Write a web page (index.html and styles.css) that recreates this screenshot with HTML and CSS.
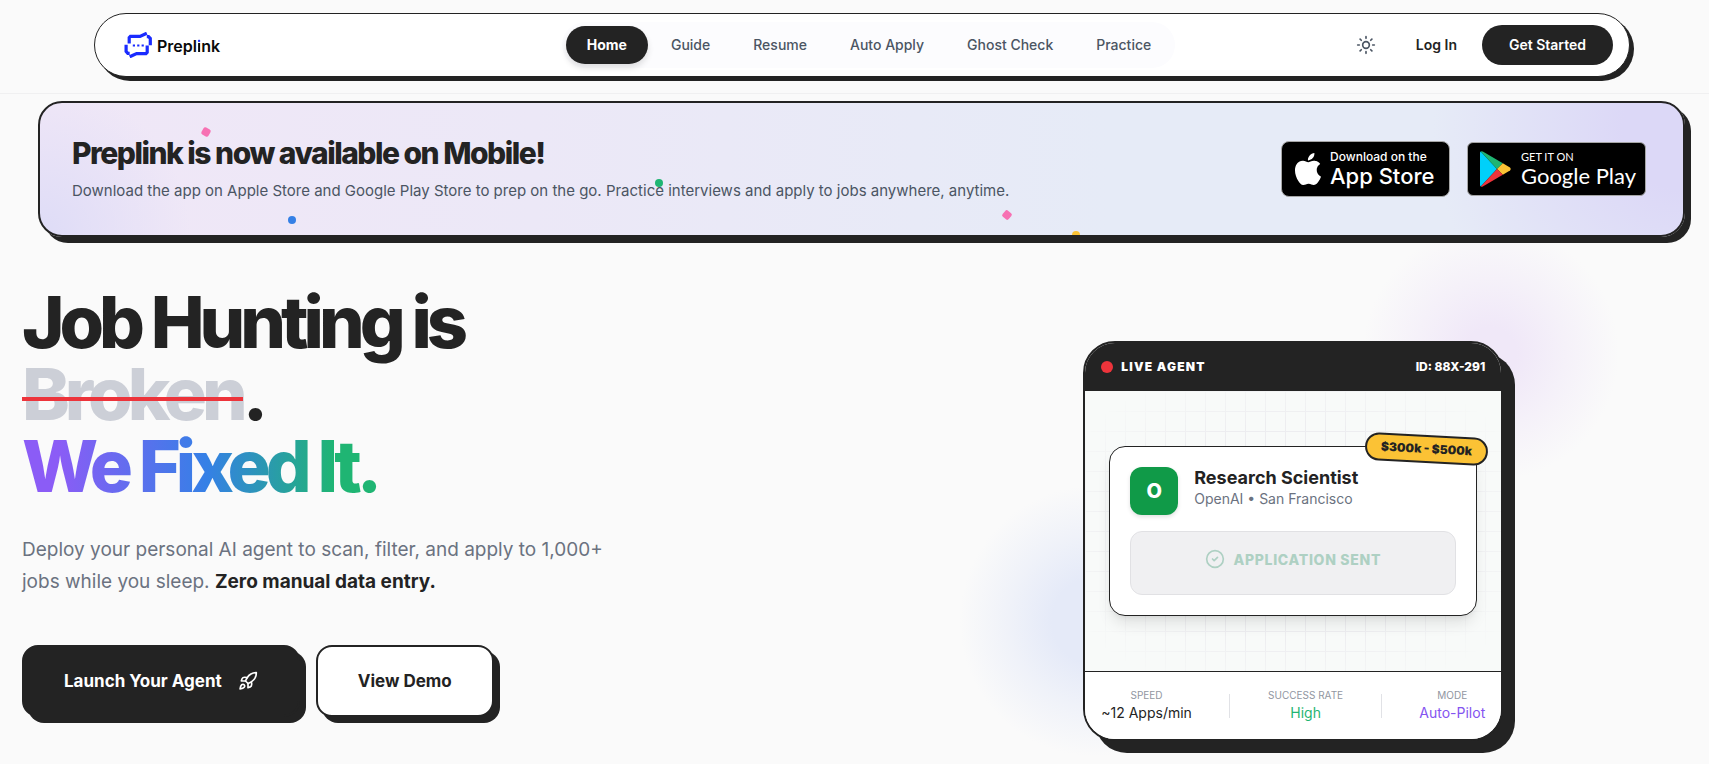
FILE: index.html
```html
<!DOCTYPE html>
<html lang="en">
<head>
<meta charset="utf-8">
<meta name="viewport" content="width=device-width, initial-scale=1">
<title>Preplink</title>
<link rel="stylesheet" href="styles.css">
</head>
<body>
<header class="site-header">
  <div class="header-pill">
    <a class="logo" href="#">
      <svg class="logo-mark" viewBox="0 0 28 26" fill="none" stroke="#1a2bff" stroke-width="3.2" aria-hidden="true">
        <path d="M5.200 11.500V5.600L6.400 4.400H16L22.800 1.200"/>
        <path d="M22.800 4.600H24.500L26.300 6.500V13.200"/>
        <path d="M23.200 13.500V20.400L22 21.600H12.600L5.700 24.800"/>
        <path d="M5.700 21.400H3.800L2.100 19.500V12.800"/>
        <path d="M8.800 13.500h2.200M13.200 13.500h2.200M17.600 13.500h2.200" stroke-width="2.2"/>
      </svg>
      <span class="logo-name">Prepl<span class="logo-i">i</span>nk</span>
    </a>
    <nav class="main-nav" aria-label="Main">
      <a class="nav-link nav-link-active" href="#">Home</a>
      <a class="nav-link" href="#">Guide</a>
      <a class="nav-link" href="#">Resume</a>
      <a class="nav-link" href="#">Auto Apply</a>
      <a class="nav-link" href="#">Ghost Check</a>
      <a class="nav-link" href="#">Practice</a>
    </nav>
    <div class="header-actions">
      <button class="theme-toggle" type="button" aria-label="Toggle theme">
        <svg viewBox="0 0 24 24" width="20" height="20" fill="none" stroke="currentColor" stroke-width="2" stroke-linecap="round" stroke-linejoin="round" aria-hidden="true">
          <circle cx="12" cy="12" r="4"/>
          <path d="M12 2v2M12 20v2M4.930 4.930l1.410 1.410M17.660 17.660l1.410 1.410M2 12h2M20 12h2M6.340 17.660l-1.410 1.410M19.070 4.930l-1.410 1.410"/>
        </svg>
      </button>
      <a class="login-link" href="#">Log In</a>
      <a class="start-button" href="#">Get Started</a>
    </div>
  </div>
</header>

<section class="banner">
  <div class="banner-text">
    <h2 class="banner-title">Preplink is now available on Mobile!</h2>
    <p class="banner-copy">Download the app on Apple Store and Google Play Store to prep on the go. Practice interviews and apply to jobs anywhere, anytime.</p>
  </div>
  <div class="stores">
    <a class="store store-apple" href="#">
      <svg class="apple-mark" viewBox="0 0 24 24" fill="#fff" aria-hidden="true"><path d="M12.152 6.896c-.948 0-2.415-1.078-3.960-1.040-2.040.027-3.910 1.183-4.961 3.014-2.117 3.675-.546 9.103 1.519 12.090 1.013 1.454 2.208 3.090 3.792 3.039 1.520-.065 2.090-.987 3.935-.987 1.831 0 2.350.987 3.960.948 1.637-.026 2.676-1.480 3.676-2.948 1.156-1.688 1.636-3.325 1.662-3.415-.039-.013-3.182-1.221-3.220-4.857-.026-3.040 2.480-4.494 2.597-4.559-1.429-2.090-3.623-2.324-4.390-2.376-2-.156-3.675 1.090-4.610 1.090zM15.530 3.830c.843-1.012 1.400-2.427 1.245-3.830-1.207.052-2.662.805-3.532 1.818-.780.896-1.454 2.338-1.273 3.714 1.338.104 2.715-.688 3.559-1.701"/></svg>
      <span class="store-text"><span class="store-small">Download on the</span><span class="store-big">App Store</span></span>
    </a>
    <a class="store store-google" href="#">
      <svg class="play-mark" viewBox="0 0 31 36" aria-hidden="true">
        <path fill="#00d0fa" d="M.8.4 17 18 .8 35.600Q0 35.200 0 34V2Q0 .8.8.4Z"/>
        <path fill="#1fb573" d="M.8.4Q1.600-.1 2.800.5L22.800 12.200 17 18Z"/>
        <path fill="#fbc235" d="M22.800 12.200 30 16.600Q31.400 18 30 19.400L22.800 23.800 17 18Z"/>
        <path fill="#ed343b" d="M.8 35.600 17 18 22.800 23.800 2.800 35.500Q1.600 36.100.8 35.600Z"/>
      </svg>
      <span class="store-text"><span class="store-small">GET IT ON</span><span class="store-big">Google Play</span></span>
    </a>
  </div>
  <span class="confetti confetti-a"></span>
  <span class="confetti confetti-b"></span>
  <span class="confetti confetti-c"></span>
  <span class="confetti confetti-d"></span>
  <span class="confetti confetti-e"></span>
</section>

<main class="hero">
  <div class="hero-copy">
    <h1 class="hero-title">Job Hunting is<br><span class="struck">Broken</span>.<br><span class="gradient-text">We Fixed It.</span></h1>
    <p class="hero-lead">Deploy your personal AI agent to scan, filter, and apply to 1,000+ jobs while you sleep. <strong>Zero manual data entry.</strong></p>
    <div class="hero-actions">
      <button class="cta cta-dark" type="button">Launch Your Agent
        <svg viewBox="0 0 24 24" width="20" height="20" fill="none" stroke="currentColor" stroke-width="2" stroke-linecap="round" stroke-linejoin="round" aria-hidden="true">
          <path d="M4.500 16.500c-1.500 1.260-2 5-2 5s3.740-.500 5-2c.710-.840.700-2.130-.090-2.910a2.180 2.180 0 0 0-2.910-.090z"/>
          <path d="m12 15-3-3a22 22 0 0 1 2-3.950A12.880 12.880 0 0 1 22 2c0 2.720-.780 7.500-6 11a22.350 22.350 0 0 1-4 2z"/>
          <path d="M9 12H4s.550-3.030 2-4c1.620-1.080 5 0 5 0"/>
          <path d="M12 15v5s3.030-.550 4-2c1.080-1.620 0-5 0-5"/>
        </svg>
      </button>
      <button class="cta cta-light" type="button">View Demo</button>
    </div>
  </div>

  <div class="hero-visual">
    <div class="device-wrap">
      <div class="glow glow-purple"></div>
      <div class="glow glow-blue"></div>
      <article class="device">
        <div class="device-head">
          <span class="live"><span class="live-dot"></span>LIVE AGENT</span>
          <span>ID: 88X-291</span>
        </div>
        <div class="device-body">
          <div class="job-card">
            <span class="salary">$300k - $500k</span>
            <div class="job-row">
              <span class="job-logo">O</span>
              <div>
                <h3 class="job-title">Research Scientist</h3>
                <p class="job-meta">OpenAI • San Francisco</p>
              </div>
            </div>
            <div class="job-status">
              <svg viewBox="0 0 24 24" width="20" height="20" fill="none" stroke="currentColor" stroke-width="2" stroke-linecap="round" stroke-linejoin="round" aria-hidden="true"><circle cx="12" cy="12" r="10"/><path d="m9 12 2 2 4-4"/></svg>
              APPLICATION SENT
            </div>
          </div>
        </div>
        <dl class="device-stats">
          <div class="stat"><dt>SPEED</dt><dd>~12 Apps/min</dd></div>
          <div class="stat-rule"></div>
          <div class="stat"><dt>SUCCESS RATE</dt><dd class="stat-green">High</dd></div>
          <div class="stat-rule"></div>
          <div class="stat"><dt>MODE</dt><dd class="stat-purple">Auto-Pilot</dd></div>
        </dl>
      </article>
    </div>
  </div>
</main>
</body>
</html>
```

FILE: styles.css
```css
:root {
  --ink: #232323;
  --paper: #fafafa;
  --slate: #4b5563;
  --muted: #6b7280;
}

* { box-sizing: border-box; }

body {
  margin: 0;
  min-height: 100vh;
  overflow: hidden;
  background: var(--paper);
  color: var(--ink);
  font-family: Inter, "Liberation Sans", sans-serif;
}

h1, h2, h3, p, dl, dd { margin: 0; }
a { color: inherit; text-decoration: none; }
button { font: inherit; cursor: pointer; }
svg { display: block; flex: none; }

/* Header */
.site-header {
  padding: 13px 79px 16px 94px;
  border-bottom: 1px solid #f0f0f1;
}

.header-pill {
  display: grid;
  grid-template-columns: 1fr auto 1fr;
  align-items: center;
  height: 64px;
  padding: 0 16px 0 29px;
  border: 1px solid var(--ink);
  border-radius: 32px;
  background: #fff;
  box-shadow: 4px 4px 0 var(--ink);
}

.logo {
  display: flex;
  align-items: center;
  gap: 5px;
  color: #0a0a0a;
}

.logo-mark { width: 28px; height: 26px; }

.logo-name {
  padding-top: 2px;
  font-size: 16px;
  font-weight: 600;
  line-height: 20px;
}

.logo-i {
  background: linear-gradient(#1a2bff 7px, #0a0a0a 7px);
  -webkit-background-clip: text;
  background-clip: text;
  color: transparent;
}

.main-nav {
  display: flex;
  align-items: center;
  gap: 3px;
  padding: 4px;
  border-radius: 24px;
  background: #fcfcfe;
}

.nav-link {
  padding: 9px 20px;
  border-radius: 19px;
  color: var(--slate);
  font-size: 14px;
  font-weight: 500;
  line-height: 20px;
}

.nav-link-active {
  padding: 9px 21px;
  background: var(--ink);
  color: #fff;
  font-weight: 700;
  box-shadow: 0 4px 6px rgba(0, 0, 0, 0.12);
}

.header-actions {
  display: flex;
  align-items: center;
  justify-content: flex-end;
  font-size: 14px;
  font-weight: 600;
  line-height: 20px;
}

.theme-toggle {
  padding: 10px;
  border: 0;
  background: none;
  color: var(--slate);
}

.login-link { padding: 10px 25px 10px 30px; }

.start-button {
  padding: 10px 27px;
  border-radius: 20px;
  background: var(--ink);
  color: #fff;
}

/* Mobile banner */
.banner {
  position: relative;
  z-index: 1;
  display: flex;
  align-items: center;
  justify-content: space-between;
  margin: 7px 24px 0 38px;
  padding: 32px 37px 32px 32px;
  border: 2px solid var(--ink);
  border-radius: 24px;
  background:
    radial-gradient(circle at 0 100%, #dedcf7 0, rgba(222, 220, 247, 0) 150px),
    radial-gradient(circle at 100% 20%, #dcd8f7 60px, rgba(220, 216, 247, 0) 250px),
    linear-gradient(90deg, #f0e7f7 0, #ece8f7 30%, #e6ebf7 65%, #e6ebf7 100%);
  box-shadow: 6px 6px 0 var(--ink);
}

.banner-title {
  font-size: 30px;
  font-weight: 800;
  letter-spacing: -0.05em;
  line-height: 36px;
}

.banner-copy {
  margin-top: 8px;
  color: var(--slate);
  font-size: 15px;
  line-height: 24px;
}

.stores {
  display: flex;
  align-items: center;
  gap: 17px;
  margin: -6px 0;
}

.store {
  display: flex;
  align-items: center;
  border: 1px solid #a6a6a6;
  background: #000;
  color: #fff;
  white-space: nowrap;
}

.store-text { display: flex; flex-direction: column; }

.store-apple {
  width: 169px;
  height: 56px;
  padding-left: 10px;
  gap: 6px;
  border-radius: 8px;
}

.apple-mark { width: 32px; height: 32px; }
.store-apple .store-small { font-size: 12px; font-weight: 500; line-height: 14px; }
.store-apple .store-big { font-size: 22px; font-weight: 500; line-height: 24px; }

.store-google {
  width: 179px;
  height: 54px;
  padding-left: 12px;
  gap: 10px;
  border-radius: 6px;
  font-family: Lato, sans-serif;
}

.play-mark { width: 31px; height: 36px; }
.store-google .store-small { font-size: 11px; line-height: 14px; }
.store-google .store-big { font-size: 22px; line-height: 24px; }

.confetti {
  position: absolute;
  width: 8px;
  height: 8px;
  border-radius: 50%;
}

.confetti-a { left: 9.860%; top: 25px; border-radius: 2px; background: #f771b3; transform: rotate(30deg); }
.confetti-b { left: 15.120%; top: 113px; background: #3580e6; }
.confetti-c { left: 37.420%; top: 76px; background: #1fb573; }
.confetti-d { left: 58.600%; top: 108px; border-radius: 2px; background: #f771b3; transform: rotate(40deg); }
.confetti-e { left: 62.800%; bottom: 0; height: 4px; border-radius: 4px 4px 0 0; background: #fbc235; }

/* Hero */
.hero {
  display: grid;
  grid-template-columns: 1fr 1fr;
  gap: 48px;
  padding: 49px 8px 23px 22px;
}

.hero-title {
  font-size: 72px;
  font-weight: 800;
  letter-spacing: -5px;
  line-height: 72px;
}

.struck {
  position: relative;
  color: #cccfd7;
}

.struck::after {
  content: "";
  position: absolute;
  left: 0;
  right: 0;
  top: 54%;
  height: 4px;
  background: #ed343b;
}

.gradient-text {
  background: linear-gradient(90deg, #8b5cf6 10%, #3580e6 52%, #1fb573 88%);
  -webkit-background-clip: text;
  background-clip: text;
  color: transparent;
}

.hero-lead {
  max-width: 600px;
  margin-top: 32px;
  color: var(--muted);
  font-size: 19px;
  line-height: 32px;
}

.hero-lead strong { color: var(--ink); font-weight: 700; }

.hero-actions {
  display: flex;
  gap: 16px;
  margin-top: 47px;
}

.cta {
  display: flex;
  align-items: center;
  gap: 16px;
  height: 72px;
  padding: 0 40px;
  border: 2px solid var(--ink);
  border-radius: 16px;
  box-shadow: 6px 6px 0 var(--ink);
  font-size: 17px;
  font-weight: 700;
  white-space: nowrap;
}

.cta-dark { background: var(--ink); color: #fff; }
.cta-light { background: #fff; color: var(--ink); }

.hero-visual {
  display: flex;
  justify-content: center;
  padding-top: 55px;
}

.device-wrap { position: relative; width: 420px; }

.glow {
  position: absolute;
  border-radius: 50%;
}

.glow-purple {
  top: -116px;
  right: -116px;
  width: 256px;
  height: 256px;
  background: radial-gradient(closest-side, #f0e8f8 20%, rgba(240, 232, 248, 0.5) 58%, rgba(240, 232, 248, 0) 100%);
}

.glow-blue {
  left: -132px;
  bottom: -24px;
  width: 288px;
  height: 288px;
  background: radial-gradient(closest-side, #e5eaf8 30%, rgba(229, 234, 248, 0.5) 60%, rgba(229, 234, 248, 0) 94%);
}

.device {
  position: relative;
  overflow: hidden;
  border: 2px solid var(--ink);
  border-radius: 32px;
  background: #fff;
  box-shadow: 12px 12px 0 var(--ink);
}

.device-head {
  display: flex;
  align-items: center;
  justify-content: space-between;
  padding: 16px;
  background: var(--ink);
  color: #fff;
  font-size: 12px;
  font-weight: 800;
  line-height: 16px;
}

.live {
  display: flex;
  align-items: center;
  gap: 8px;
  font-weight: 900;
  letter-spacing: 0.1em;
}

.live-dot {
  width: 12px;
  height: 12px;
  border-radius: 50%;
  background: #ed343b;
}

.device-body {
  position: relative;
  display: flex;
  align-items: center;
  justify-content: center;
  padding: 55px 24px;
  background: #f8faf9;
}

.device-body::before {
  content: "";
  position: absolute;
  inset: 0;
  background:
    linear-gradient(90deg, #ededf0 1px, transparent 1px) 0 0 / 20px 20px,
    linear-gradient(#ededf0 1px, transparent 1px) 0 0 / 20px 20px;
  -webkit-mask-image: radial-gradient(ellipse at center, #000 55%, transparent 88%);
  mask-image: radial-gradient(ellipse at center, #000 55%, transparent 88%);
}

.job-card {
  position: relative;
  flex: 1;
  padding: 20px;
  border: 1px solid var(--ink);
  border-radius: 16px;
  background: #fff;
  box-shadow: 0 10px 15px -3px rgba(0, 0, 0, 0.1), 0 4px 6px -4px rgba(0, 0, 0, 0.1);
}

.salary {
  position: absolute;
  top: -12px;
  right: -12px;
  padding: 4px 14px;
  border: 2px solid var(--ink);
  border-radius: 14px;
  background: #fbc235;
  font-size: 12px;
  font-weight: 900;
  line-height: 16px;
  transform: rotate(3deg);
}

.job-row { display: flex; gap: 16px; }

.job-logo {
  display: grid;
  place-items: center;
  width: 48px;
  height: 48px;
  border-radius: 12px;
  background: #109a48;
  color: #fff;
  font-size: 20px;
  font-weight: 800;
  box-shadow: 0 2px 4px rgba(0, 0, 0, 0.12);
}

.job-title { font-size: 18px; font-weight: 700; line-height: 22px; }
.job-meta { color: var(--muted); font-size: 14px; line-height: 20px; }

.job-status {
  display: flex;
  align-items: center;
  justify-content: center;
  gap: 8px;
  height: 64px;
  margin-top: 16px;
  padding-bottom: 8px;
  border: 1px solid #e1e1e4;
  border-radius: 12px;
  background: #f0f0f2;
  color: #aed0c3;
  font-size: 14px;
  font-weight: 800;
  letter-spacing: 0.05em;
}

.device-stats {
  display: flex;
  align-items: center;
  justify-content: space-between;
  padding: 16px;
  border-top: 1px solid var(--ink);
  background: #fff;
  text-align: center;
}

.stat dt { color: #9196a1; font-size: 10px; line-height: 15px; }
.stat dd { font-size: 14px; line-height: 20px; }
.stat .stat-green { color: #1fb573; }
.stat .stat-purple { color: #8454f0; }

.stat-rule { width: 1px; height: 24px; background: #e1e2e6; }
```
